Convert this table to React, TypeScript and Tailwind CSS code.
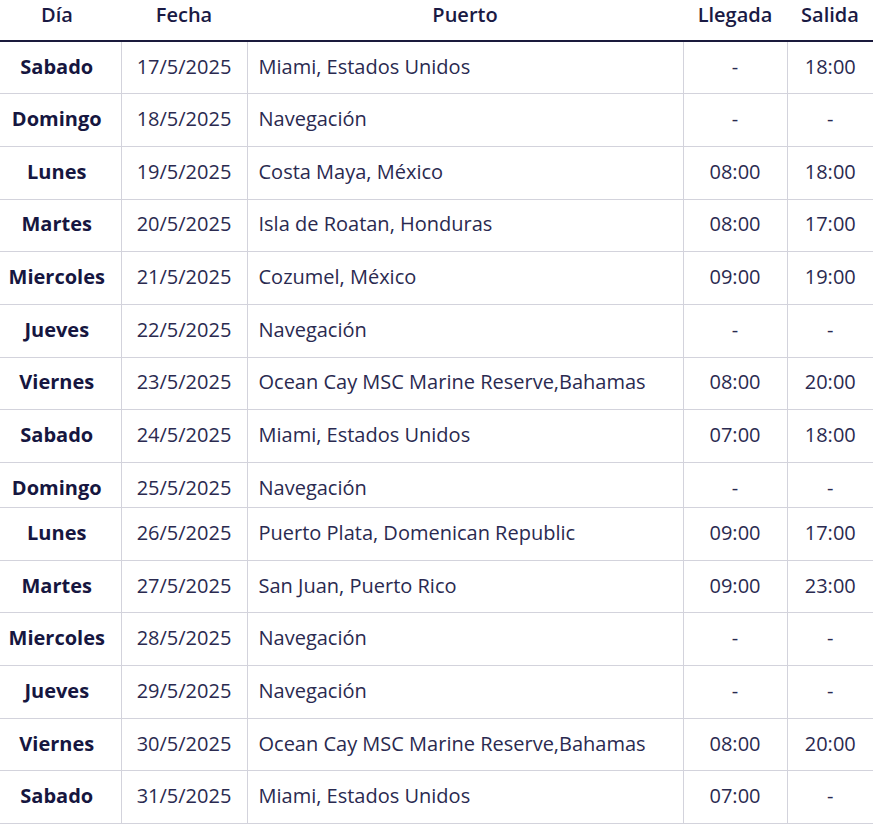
import React from "react";

type Row = [string, string, string, string, string, boolean?];

const rows: Row[] = [
  ["Sabado", "17/5/2025", "Miami, Estados Unidos", "-", "18:00"],
  ["Domingo", "18/5/2025", "Navegación", "-", "-"],
  ["Lunes", "19/5/2025", "Costa Maya, México", "08:00", "18:00"],
  ["Martes", "20/5/2025", "Isla de Roatan, Honduras", "08:00", "17:00"],
  ["Miercoles", "21/5/2025", "Cozumel, México", "09:00", "19:00"],
  ["Jueves", "22/5/2025", "Navegación", "-", "-"],
  ["Viernes", "23/5/2025", "Ocean Cay MSC Marine Reserve,Bahamas", "08:00", "20:00"],
  ["Sabado", "24/5/2025", "Miami, Estados Unidos", "07:00", "18:00"],
  ["Domingo", "25/5/2025", "Navegación", "-", "-", true],
  ["Lunes", "26/5/2025", "Puerto Plata, Domenican Republic", "09:00", "17:00"],
  ["Martes", "27/5/2025", "San Juan, Puerto Rico", "09:00", "23:00"],
  ["Miercoles", "28/5/2025", "Navegación", "-", "-"],
  ["Jueves", "29/5/2025", "Navegación", "-", "-"],
  ["Viernes", "30/5/2025", "Ocean Cay MSC Marine Reserve,Bahamas", "08:00", "20:00"],
  ["Sabado", "31/5/2025", "Miami, Estados Unidos", "07:00", "-"],
];

export default function App() {
  return (
    <div
      className="w-[876px] h-[830px] bg-white text-[#2a2a50]"
      style={{ fontFamily: '"Open Sans", "Noto Sans", sans-serif' }}
    >
      <table className="w-[873px] table-fixed border-collapse text-[20px]">
        <colgroup>
          <col className="w-[121px]" />
          <col className="w-[126px]" />
          <col className="w-[436px]" />
          <col className="w-[104px]" />
          <col className="w-[86px]" />
        </colgroup>
        <thead>
          <tr className="h-[41px] border-b-2 border-[#1a1a3c]">
            <th className="font-semibold text-[#1a1a44] text-center align-top pr-[7px]">Día</th>
            <th className="font-semibold text-[#1a1a44] text-center align-top">Fecha</th>
            <th className="font-semibold text-[#1a1a44] text-center align-top">Puerto</th>
            <th className="font-semibold text-[#1a1a44] text-center align-top">Llegada</th>
            <th className="font-semibold text-[#1a1a44] text-center align-top">Salida</th>
          </tr>
        </thead>
        <tbody>
          {rows.map((r, i) => (
            <tr
              key={i}
              className={`${r[5] ? "h-[45px] [&>td]:pt-[6px]" : "h-[52.7px] [&>td]:pb-[2px]"} border-b border-[#d3d3dc]`}
            >
              <td className="font-bold text-[#161640] text-center whitespace-nowrap pr-[7px]">{r[0]}</td>
              <td className="text-center border-l border-[#d3d3dc]">{r[1]}</td>
              <td className="text-left pl-[11px] border-l border-[#d3d3dc] whitespace-nowrap">{r[2]}</td>
              <td className="text-center border-l border-[#d3d3dc]">{r[3]}</td>
              <td className="text-center border-l border-[#d3d3dc]">{r[4]}</td>
            </tr>
          ))}
        </tbody>
      </table>
    </div>
  );
}
